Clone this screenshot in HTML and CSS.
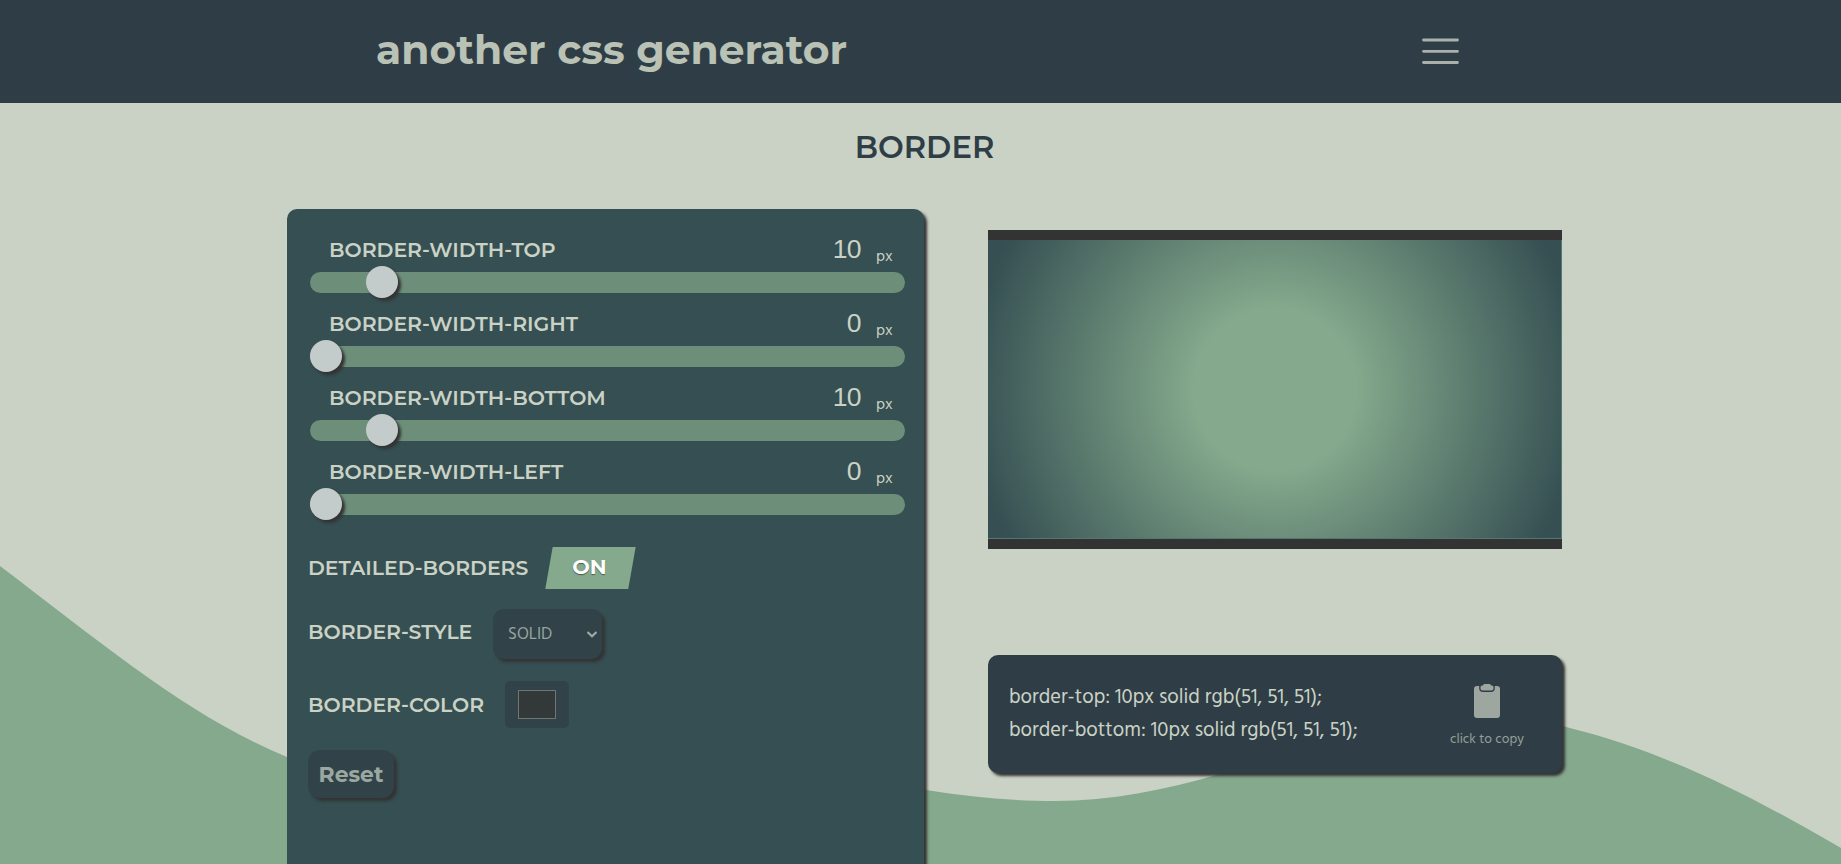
FILE: index.html
```html
<!DOCTYPE html>
<html lang="en">
<head>
<meta charset="utf-8">
<title>another css generator</title>
<link rel="stylesheet" href="styles.css">
</head>
<body>
<svg class="wave" viewBox="0 0 1841 864" aria-hidden="true"><path d="M0 566C108 648 190 717 287 757C500 850 700 750 926 790C970 797 1010 801 1055 801C1110 801 1165 790 1220 774C1330 742 1440 680 1566 727C1660 750 1745 792 1841 848V864H0Z" fill="#84a98c"/></svg>
<header class="header">
  <h1 class="brand">another css generator</h1>
  <svg class="menu" viewBox="0 0 38 28"><path d="M1.5 2h34M1.5 13.300h34M1.5 24.500h34" stroke="#a9b1a8" stroke-width="2.8" stroke-linecap="round"/></svg>
</header>
<main>
  <h2 class="title">BORDER</h2>
  <div class="columns">
    <section class="controls">
      <div class="range"><div class="range-head"><span class="label">BORDER-WIDTH-TOP</span><span class="value">10</span><span class="unit">px</span></div><div class="track"><i class="thumb ten"></i></div></div>
      <div class="range"><div class="range-head"><span class="label">BORDER-WIDTH-RIGHT</span><span class="value">0</span><span class="unit">px</span></div><div class="track"><i class="thumb"></i></div></div>
      <div class="range"><div class="range-head"><span class="label">BORDER-WIDTH-BOTTOM</span><span class="value">10</span><span class="unit">px</span></div><div class="track"><i class="thumb ten"></i></div></div>
      <div class="range"><div class="range-head"><span class="label">BORDER-WIDTH-LEFT</span><span class="value">0</span><span class="unit">px</span></div><div class="track"><i class="thumb"></i></div></div>
      <div class="row toggle-row"><span class="label">DETAILED-BORDERS</span><button class="toggle"><span>ON</span></button></div>
      <div class="row style-row"><span class="label">BORDER-STYLE</span><div class="select"><span>SOLID</span><svg viewBox="0 0 10 7"><path d="M.5 1L5 5.3 9.500 1" fill="none" stroke="#a1aba3" stroke-width="2"/></svg></div></div>
      <div class="row color-row"><span class="label">BORDER-COLOR</span><div class="swatch"><i></i></div></div>
      <button class="reset">Reset</button>
    </section>
    <section class="output">
      <div class="preview"></div>
      <div class="code">
        <div class="lines"><p>border-top: 10px solid rgb(51, 51, 51);</p><p>border-bottom: 10px solid rgb(51, 51, 51);</p></div>
        <div class="copy"><svg viewBox="0 0 26 34"><path d="M3 2h2.2v2.2Q5.2 8 9 8h8Q20.8 8 20.8 4.200V2H23Q26 2 26 5v26q0 3-3 3H3q-3 0-3-3V5Q0 2 3 2Z" fill="#9da69f"/><path d="M9 1.500Q9 0 10.500 0h5Q17 0 17 1.500h1Q19.500 1.500 19.500 3v1.500Q19.500 6.500 17.500 6.500h-9Q6.500 6.500 6.500 4.500V3Q6.500 1.500 8 1.500Z" fill="#9da69f"/></svg><span>click to copy</span></div>
      </div>
    </section>
  </div>
</main>
</body>
</html>
```
FILE: styles.css
```css
* { box-sizing: border-box; }
html { height: 864px; overflow: hidden; }
body { margin: 0; height: 864px; overflow: hidden; background: #cad2c5; font-family: Hind, "Open Sans", sans-serif; color: #cad2c5; }
h1, h2, p { margin: 0; }
button { border: 0; padding: 0; font: inherit; }
.wave { position: absolute; inset: 0; width: 1841px; height: 864px; z-index: -1; }
.header { height: 103px; background: #2f3e46; display: flex; justify-content: space-between; align-items: center; padding: 0 381px 0 376px; }
.brand { margin-top: -3px; font: 700 40.8px/50px Montserrat, Inter, sans-serif; color: #bac2b6; white-space: nowrap; }
.menu { width: 38px; height: 28px; }
.title { margin: 29px 0 0; padding-left: 8px; height: 77px; text-align: center; font: 600 30.6px/31px Montserrat, Inter, sans-serif; color: #2f3e46; }
.columns { display: flex; gap: 64px; padding-left: 287px; }
.controls { width: 637px; height: 655px; padding: 20px 19px 0 21px; background: #354f52; border-radius: 10px 10px 0 0; box-shadow: 3px 3px 3px #333; }
.range { height: 74px; padding-left: 2px; }
.range-head { height: 43px; display: flex; align-items: flex-start; padding: 0 13px 0 19px; }
.label { font: 600 20.4px/24px Montserrat, Inter, sans-serif; white-space: nowrap; }
.range-head .label { margin-top: 9px; }
.value { margin-left: auto; width: 60px; text-align: right; font: 400 26.500px/32px "Liberation Sans", Arial, sans-serif; letter-spacing: -.6px; margin-top: 4px; }
.unit { width: 16px; margin: 17px 0 0 15px; font: 400 16px/22px Hind, "Open Sans", sans-serif; }
.track { position: relative; width: 595px; height: 21px; background: #6d8f7a; border-radius: 10.500px; }
.thumb { position: absolute; left: 0; top: -6px; width: 32px; height: 32px; border-radius: 50%; background: #c4cccb; box-shadow: 3px 3px 3px #333; }
.thumb.ten { left: 56px; }
.row { display: flex; }
.toggle-row { height: 84px; padding-top: 22px; }
.toggle-row .label { margin-top: 9px; width: 241px; }
.toggle { width: 83px; height: 41.500px; color: #fff; background: #84a98c; transform: skewX(-10deg); }
.toggle span { display: block; transform: skewX(10deg) translate(-1px, -1.5px); font: 700 20.800px/24px Montserrat, Inter, sans-serif; text-shadow: 0 1px 1px #0007; }
.style-row { height: 72px; }
.style-row .label { width: 185px; margin-top: 11px; }
.select { width: 109px; height: 50px; padding: 0 5px 0 15px; display: flex; align-items: center; justify-content: space-between; border-radius: 11px; background: #314249; color: #98a49e; font-size: 17px; box-shadow: 3px 3px 3px #333; }
.select svg { width: 10px; height: 7px; }
.color-row { height: 69px; }
.color-row .label { width: 197px; margin-top: 12px; }
.swatch { width: 64px; height: 47px; padding: 9px 13px; border-radius: 5px; background: #314249; }
.swatch i { display: block; width: 38px; height: 29px; background: #333838; border: 1px solid #6e7575; }
.reset { display: block; width: 86px; height: 48px; padding-bottom: 1px; border-radius: 12px; background: #314249; color: #9ba8a0; font: 700 21.900px/24px Montserrat, Inter, sans-serif; box-shadow: 3px 3px 3px #333; }
.output { width: 574px; padding-top: 21px; }
.preview { width: 574px; height: 319px; border: solid #333; border-width: 10px 0; background: radial-gradient(circle, #84a98c 25%, #354f52 95%); box-shadow: inset -1px -1px #527872; }
.code { margin-top: 106px; height: 118px; display: flex; justify-content: space-between; padding: 26px 35px 0 21px; border-radius: 10px; background: #2f3e46; box-shadow: 3px 3px 3px #333; }
.lines p { font-size: 20.400px; line-height: 33px; white-space: nowrap; }
.copy { width: 80px; padding-top: 3px; display: flex; flex-direction: column; align-items: center; color: #94a09a; }
.copy svg { width: 26px; height: 34px; }
.copy span { margin-top: 11px; font-size: 13.700px; line-height: 22px; white-space: nowrap; }
```
